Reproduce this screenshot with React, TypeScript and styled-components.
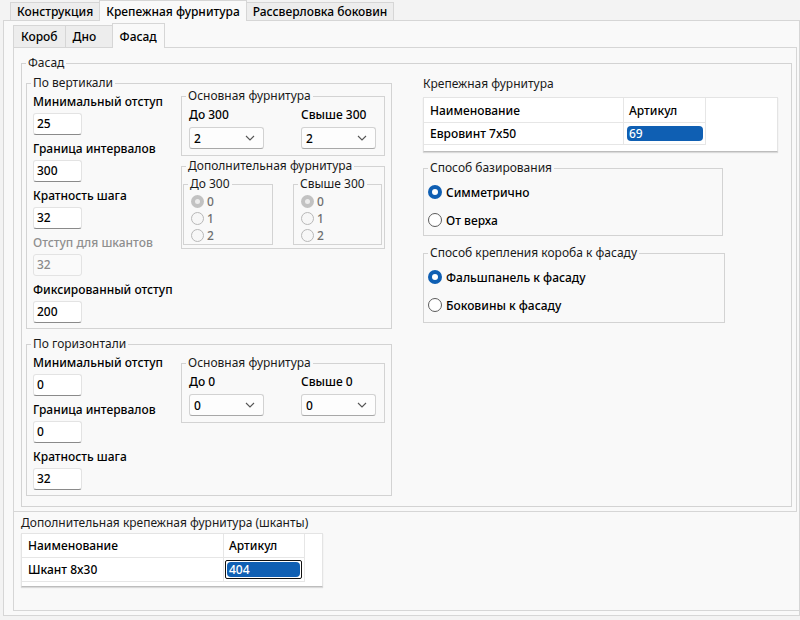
import React from 'react'
import styled, { createGlobalStyle } from 'styled-components'

const BORDER = '#d6d6d6'
const ACCENT = '#0f5fb3'
const LABEL_WEIGHT = 460

const GlobalStyle = createGlobalStyle`
  html, body {
    margin: 0;
    padding: 0;
    background: #f3f3f3;
  }
  body {
    font-family: "Noto Sans", "Liberation Sans", sans-serif;
    font-size: 12px;
    color: #111;
  }
  * {
    box-sizing: border-box;
  }
`

const Root = styled.div`
  width: 800px;
  height: 620px;
  overflow: hidden;
  padding-left: 3px;
  background: #f3f3f3;
`

const TabBar = styled.div<{ $h: number; $pad: number }>`
  display: flex;
  align-items: flex-end;
  height: ${p => p.$h}px;
  padding-left: ${p => p.$pad}px;
  position: relative;
  z-index: 1;
`

const Tab = styled.div<{ $active?: boolean; $h: number; $min?: number }>`
  display: flex;
  align-items: center;
  height: ${p => (p.$active ? p.$h + 3 : p.$h)}px;
  min-width: ${p => p.$min || 0}px;
  margin-bottom: ${p => (p.$active ? -1 : 0)}px;
  margin-right: -1px;
  padding: 0 ${p => (p.$min ? 7 : 6)}px;
  border: 1px solid ${BORDER};
  border-bottom: none;
  background: ${p => (p.$active ? '#f9f9f9' : '#ededed')};
  white-space: nowrap;
  font-weight: ${LABEL_WEIGHT};
  color: #000;
`

const Pane = styled.div`
  width: 797px;
  height: 596px;
  border: 1px solid ${BORDER};
  background: #f9f9f9;
  padding-left: 9px;
  display: flex;
  flex-direction: column;
`

const InnerPane = styled.div`
  width: 784px;
  height: 465px;
  flex: none;
  border: 1px solid ${BORDER};
  background: #f9f9f9;
  padding: 8px 0 0 7px;
`

const BottomPanel = styled.div`
  flex: 1;
  margin-bottom: 4px;
  border-left: 1px solid ${BORDER};
  border-bottom: 1px solid ${BORDER};
  padding: 3px 0 0 7px;
`

const Group = styled.fieldset<{ $w: number; $pad: string; $mt?: number }>`
  margin: ${p => p.$mt || 0}px 0 0 0;
  padding: ${p => p.$pad};
  width: ${p => p.$w}px;
  min-width: 0;
  border: 1px solid #d3d3d3;
  border-radius: 0;
`

// the legend sits inside the padding box, so its offset makes up for the group's left padding
const Legend = styled.legend<{ $x: number }>`
  margin-left: ${p => p.$x}px;
  padding: 0 2px;
  line-height: 14px;
  color: #1a1a1a;
  white-space: nowrap;
`

const FacadeBody = styled.div`
  display: flex;
  gap: 31px;
`

const LeftColumn = styled.div`
  display: flex;
  flex-direction: column;
  gap: 8px;
`

const RightColumn = styled.div`
  display: flex;
  flex-direction: column;
`

const GroupBody = styled.div`
  display: flex;
  justify-content: space-between;
`

const Fields = styled.div`
  display: flex;
  flex-direction: column;
`

const FieldLabel = styled.div<{ $disabled?: boolean }>`
  line-height: 18px;
  white-space: nowrap;
  font-weight: ${LABEL_WEIGHT};
  color: ${p => (p.$disabled ? '#8f8f8f' : '#000')};
`

const TextBox = styled.div<{ $disabled?: boolean }>`
  width: 49px;
  height: 22px;
  margin: 2px 0 5px;
  padding-left: 3px;
  line-height: 20px;
  font-weight: ${LABEL_WEIGHT};
  background: ${p => (p.$disabled ? '#fafafa' : '#fff')};
  border: 1px solid #e3e3e3;
  border-bottom-color: ${p => (p.$disabled ? '#e3e3e3' : '#8a8a8a')};
  border-radius: 3px;
  color: ${p => (p.$disabled ? '#8a8a8a' : '#000')};
`

const SideStack = styled.div<{ $shift: number }>`
  margin-top: ${p => p.$shift}px;
  display: flex;
  flex-direction: column;
`

const ComboRow = styled.div`
  display: flex;
  justify-content: space-between;
`

const ComboCol = styled.div`
  width: 75px;
  display: flex;
  flex-direction: column;
`

const SmallLabel = styled.div`
  line-height: 16px;
  font-weight: ${LABEL_WEIGHT};
  color: #000;
  white-space: nowrap;
`

const Combo = styled.div`
  height: 22px;
  margin-top: 4px;
  padding: 0 8px 0 4px;
  display: flex;
  align-items: center;
  justify-content: space-between;
  background: #fdfdfd;
  border: 1px solid #d2d2d2;
  border-bottom-color: #a8a8a8;
  border-radius: 3px;
  font-weight: ${LABEL_WEIGHT};
  color: #000;
`

const SubGroups = styled.div`
  display: flex;
  justify-content: space-between;
`

const RadioRow = styled.div<{ $h: number; $gap: number; $disabled?: boolean }>`
  display: flex;
  align-items: center;
  height: ${p => p.$h}px;
  gap: ${p => p.$gap}px;
  font-weight: ${LABEL_WEIGHT};
  color: ${p => (p.$disabled ? '#6f6f6f' : '#000')};
  white-space: nowrap;
`

const RadioStack = styled.div<{ $gap: number }>`
  display: flex;
  flex-direction: column;
  gap: ${p => p.$gap}px;
`

const Dot = styled.span<{ $size: number; $checked?: boolean; $disabled?: boolean }>`
  flex: none;
  width: ${p => p.$size}px;
  height: ${p => p.$size}px;
  border-radius: 50%;
  display: flex;
  align-items: center;
  justify-content: center;
  background: ${p =>
    p.$checked ? (p.$disabled ? '#c2c2c2' : ACCENT) : p.$disabled ? '#f7f7f7' : '#fff'};
  border: ${p => (p.$checked ? 'none' : `1px solid ${p.$disabled ? '#b8b8b8' : '#5c5c5c'}`)};

  &::after {
    content: '';
    display: ${p => (p.$checked ? 'block' : 'none')};
    width: ${p => Math.round(p.$size * 0.4)}px;
    height: ${p => Math.round(p.$size * 0.4)}px;
    border-radius: 50%;
    background: ${p => (p.$disabled ? '#ececec' : '#fff')};
  }
`

const Caption = styled.div`
  line-height: 16px;
  color: #1a1a1a;
  white-space: nowrap;
`

const Table = styled.div<{ $w: number; $h: number; $mt: number }>`
  width: ${p => p.$w}px;
  height: ${p => p.$h}px;
  margin-top: ${p => p.$mt}px;
  background: #fff;
  border: 1px solid #e4e4e4;
  border-bottom-color: #bdbdbd;
  box-shadow: 0 1px 1px rgba(0, 0, 0, 0.12);
`

const TableGrid = styled.div<{ $cols: string; $rows: string }>`
  display: inline-grid;
  grid-template-columns: ${p => p.$cols};
  grid-template-rows: ${p => p.$rows};
`

const Cell = styled.div<{ $pad: number }>`
  display: flex;
  align-items: center;
  padding-left: ${p => p.$pad}px;
  border-bottom: 1px solid #e6e6e6;
  border-right: 1px solid #e6e6e6;
  font-weight: ${LABEL_WEIGHT};
  color: #000;
  white-space: nowrap;
`

const EditCell = styled.div<{ $outlined?: boolean }>`
  display: flex;
  align-items: center;
  padding: 0 2px 0 ${p => (p.$outlined ? 1 : 3)}px;
  border-bottom: 1px solid #e6e6e6;
  border-right: 1px solid #e6e6e6;
`

const Highlight = styled.div<{ $outlined?: boolean }>`
  flex: 1;
  padding: ${p => (p.$outlined ? 1 : 0)}px;
  border: ${p => (p.$outlined ? '1px solid #111' : 'none')};
  border-radius: 2px;
`

const HighlightFill = styled.div`
  height: 15px;
  line-height: 15px;
  padding-left: 2px;
  border-radius: 4px;
  background: ${ACCENT};
  font-weight: ${LABEL_WEIGHT};
  color: #fff;
`

function Chevron () {
  return (
    <svg width="10" height="6" viewBox="0 0 10 6" fill="none">
      <path d="M1 1l4 4 4-4" stroke="#555" strokeWidth="1.1" />
    </svg>
  )
}

interface IRadio {
  label: string,
  checked?: boolean,
  disabled?: boolean,
  small?: boolean,
}

function Radio ({ label, checked, disabled, small }: IRadio) {
  return (
    <RadioRow $h={small ? 17 : 18} $gap={small ? 3 : 4} $disabled={disabled}>
      <Dot $size={small ? 13 : 14} $checked={checked} $disabled={disabled} />
      {label}
    </RadioRow>
  )
}

interface IField {
  label: string,
  value: string,
  disabled?: boolean,
}

function Field ({ label, value, disabled }: IField) {
  return (
    <>
      <FieldLabel $disabled={disabled}>{label}</FieldLabel>
      <TextBox $disabled={disabled}>{value}</TextBox>
    </>
  )
}

function MainHardware ({ low, high, value }: { low: string, high: string, value: string }) {
  return (
    <Group $w={204} $pad="4px 8px 6px 7px">
      <Legend $x={-3}>Основная фурнитура</Legend>
      <ComboRow>
        <ComboCol>
          <SmallLabel>{low}</SmallLabel>
          <Combo>{value}<Chevron /></Combo>
        </ComboCol>
        <ComboCol>
          <SmallLabel>{high}</SmallLabel>
          <Combo>{value}<Chevron /></Combo>
        </ComboCol>
      </ComboRow>
    </Group>
  )
}

function RadioSubGroup ({ title, w }: { title: string, w: number }) {
  return (
    <Group $w={w} $pad="2px 0 0 7px">
      <Legend $x={-3}>{title}</Legend>
      <Radio label="0" checked disabled small />
      <Radio label="1" disabled small />
      <Radio label="2" disabled small />
    </Group>
  )
}

function HardwareTable ({ w, h, mt, cols, rows, name, code, outlined }: {
  w: number, h: number, mt: number, cols: string, rows: string,
  name: string, code: string, outlined?: boolean,
}) {
  return (
    <Table $w={w} $h={h} $mt={mt}>
      <TableGrid $cols={cols} $rows={rows}>
        <Cell $pad={6}>Наименование</Cell>
        <Cell $pad={5}>Артикул</Cell>
        <Cell $pad={6}>{name}</Cell>
        <EditCell $outlined={outlined}>
          <Highlight $outlined={outlined}>
            <HighlightFill>{code}</HighlightFill>
          </Highlight>
        </EditCell>
      </TableGrid>
    </Table>
  )
}

export default function App () {
  return (
    <Root>
      <GlobalStyle />
      <TabBar $h={20} $pad={7}>
        <Tab $h={18}>Конструкция</Tab>
        <Tab $h={18} $active>Крепежная фурнитура</Tab>
        <Tab $h={18}>Рассверловка боковин</Tab>
      </TabBar>
      <Pane>
        <TabBar $h={26} $pad={0}>
          <Tab $h={22} $min={48}>Короб</Tab>
          <Tab $h={22} $min={48}>Дно</Tab>
          <Tab $h={22} $min={48} $active>Фасад</Tab>
        </TabBar>
        <InnerPane>
          <Group $w={771} $pad="6px 0 10px 4px">
            <Legend $x={0}>Фасад</Legend>
            <FacadeBody>
              <LeftColumn>
                <Group $w={366} $pad="3px 6px 0 6px">
                  <Legend $x={-2}>По вертикали</Legend>
                  <GroupBody>
                    <Fields>
                      <Field label="Минимальный отступ" value="25" />
                      <Field label="Граница интервалов" value="300" />
                      <Field label="Кратность шага" value="32" />
                      <Field label="Отступ для шкантов" value="32" disabled />
                      <Field label="Фиксированный отступ" value="200" />
                    </Fields>
                    <SideStack $shift={-4}>
                      <MainHardware low="До 300" high="Свыше 300" value="2" />
                      <Group $w={204} $pad="4px 2px 3px 1px" $mt={3}>
                        <Legend $x={3}>Дополнительная фурнитура</Legend>
                        <SubGroups>
                          <RadioSubGroup title="До 300" w={90} />
                          <RadioSubGroup title="Свыше 300" w={89} />
                        </SubGroups>
                      </Group>
                    </SideStack>
                  </GroupBody>
                </Group>
                <Group $w={366} $pad="3px 6px 0 6px">
                  <Legend $x={-2}>По горизонтали</Legend>
                  <GroupBody>
                    <Fields>
                      <Field label="Минимальный отступ" value="0" />
                      <Field label="Граница интервалов" value="0" />
                      <Field label="Кратность шага" value="32" />
                    </Fields>
                    <SideStack $shift={2}>
                      <MainHardware low="До 0" high="Свыше 0" value="0" />
                    </SideStack>
                  </GroupBody>
                </Group>
              </LeftColumn>
              <RightColumn>
                <Caption>Крепежная фурнитура</Caption>
                <HardwareTable
                  w={355} h={55} mt={5}
                  cols="200px 82px" rows="25px 22px"
                  name="Евровинт 7x50" code="69"
                />
                <Group $w={300} $pad="8px 4px 6px 4px" $mt={9}>
                  <Legend $x={0}>Способ базирования</Legend>
                  <RadioStack $gap={10}>
                    <Radio label="Симметрично" checked />
                    <Radio label="От верха" />
                  </RadioStack>
                </Group>
                <Group $w={302} $pad="8px 4px 8px 4px" $mt={10}>
                  <Legend $x={0}>Способ крепления короба к фасаду</Legend>
                  <RadioStack $gap={10}>
                    <Radio label="Фальшпанель к фасаду" checked />
                    <Radio label="Боковины к фасаду" />
                  </RadioStack>
                </Group>
              </RightColumn>
            </FacadeBody>
          </Group>
        </InnerPane>
        <BottomPanel>
          <Caption>Дополнительная крепежная фурнитура (шканты)</Caption>
          <HardwareTable
            w={302} h={54} mt={2}
            cols="202px 81px" rows="24px 24px"
            name="Шкант 8x30" code="404" outlined
          />
        </BottomPanel>
      </Pane>
    </Root>
  )
}
